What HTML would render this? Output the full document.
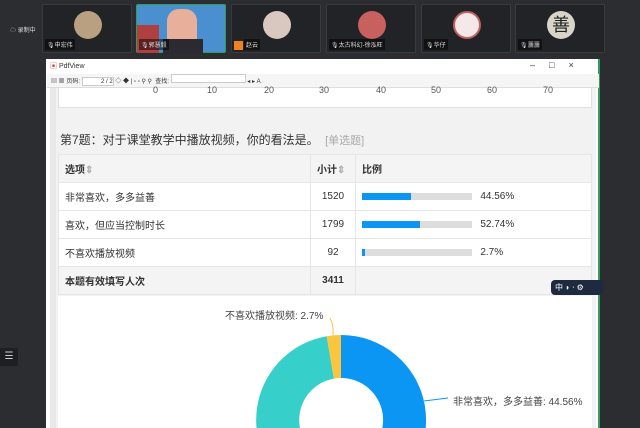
<!DOCTYPE html>
<html><head><meta charset="utf-8"><style>
*{margin:0;padding:0;box-sizing:border-box}
html,body{width:640px;height:428px;overflow:hidden}
body{background:#2b2d30;position:relative;font-family:"Liberation Sans","Noto Sans CJK SC",sans-serif}
.tile{position:absolute;top:4px;width:90px;height:49px;background:#222326;border:1px solid #3a3b3e;border-radius:2px}
.av{position:absolute;left:31px;top:6px;width:28px;height:28px;border-radius:50%}
.nm{position:absolute;left:2px;bottom:2px;font-size:6px;color:#ddd;background:rgba(0,0,0,.5);padding:1px 2px}
.abs{position:absolute}
td{border:1px solid #e6e6e6;font-size:10px;color:#333;padding:0 6px;height:28px;vertical-align:middle}
</style></head><body>
<div class="abs" style="left:10px;top:25px;font-size:6px;color:#ddd">☁ 录制中</div>
<div class="tile" style="left:42px"><div class="av" style="background:#b8a080"></div><div class="nm">🎙申宏伟</div></div>
<div class="tile" style="left:136px;border:1px solid #2e9e5b;background:#4a90d0"><div class="abs" style="left:0;top:20px;width:22px;height:28px;background:#b04040"></div><div class="abs" style="left:30px;top:4px;width:30px;height:45px;background:#e8b09a;border-radius:12px 12px 4px 4px"></div><div class="abs" style="left:26px;top:34px;width:40px;height:15px;background:#2a2a30"></div><div class="nm">🎙郭慧毅</div></div>
<div class="tile" style="left:231px"><div class="av" style="background:#d8c8c0"></div><div class="abs" style="left:2px;bottom:2px;width:9px;height:9px;background:#f08020"></div><div class="nm" style="left:12px">赵云</div></div>
<div class="tile" style="left:326px"><div class="av" style="background:#c86060"></div><div class="nm">🎙太古科幻-徐泓旺</div></div>
<div class="tile" style="left:421px"><div class="av" style="background:#f4e8e8;border:2px solid #c06060"></div><div class="nm">🎙华仔</div></div>
<div class="tile" style="left:515px"><div class="av" style="background:#d8d4c8;font-size:18px;text-align:center;line-height:28px;color:#222">善</div><div class="nm">🎙瀰瀰</div></div>
<div class="abs" style="left:46px;top:59px;width:554px;height:369px;background:#fff;border-right:2px solid #2e9e5b"></div>
<div class="abs" style="left:50px;top:61px;font-size:7px;color:#333"><span style="color:#d33">▣</span> PdfView</div>
<div class="abs" style="left:530px;top:60px;font-size:9px;color:#333;letter-spacing:14px">–□×</div>
<div class="abs" style="left:47px;top:74px;width:552px;height:14px;background:#f5f5f5;border-bottom:1px solid #ddd;font-size:6px;color:#333;line-height:14px;padding-left:4px">▤ ▦ 页码: <span style="display:inline-block;width:32px;height:9px;border:1px solid #ccc;background:#fff;text-align:right;line-height:8px">2 / 2</span> ◇ ◆ | ▫ ▫ ⚲ ⚲ &nbsp;查找: <span style="display:inline-block;width:75px;height:9px;border:1px solid #ccc;background:#fff"></span> ◂ ▸ A</div>
<div class="abs" style="left:50px;top:88px;width:6px;height:340px;background:#e8e8e8"></div>
<div class="abs" style="left:56px;top:88px;width:540px;height:340px;background:#f2f2f2"></div>
<div class="abs" style="left:58px;top:88px;width:534px;height:20px;background:#fff;border:1px solid #e0e0e0;border-top:none"></div>
<div class="abs" style="left:150px;top:85px;font-size:9px;color:#555">
<span style="position:absolute;left:3px">0</span><span style="position:absolute;left:57px">10</span><span style="position:absolute;left:114px">20</span><span style="position:absolute;left:169px">30</span><span style="position:absolute;left:226px">40</span><span style="position:absolute;left:281px">50</span><span style="position:absolute;left:337px">60</span><span style="position:absolute;left:393px">70</span></div>
<div class="abs" style="left:60px;top:131px;font-size:12px;color:#333">第7题：对于课堂教学中播放视频，你的看法是。 <span style="color:#aaa;font-size:11px">&nbsp;[单选题]</span></div>
<table class="abs" style="left:58px;top:154px;width:534px;border-collapse:collapse;background:#fff">
<tr style="background:#f4f4f4"><td style="width:252px;font-weight:bold">选项<span style="color:#aaa">⇕</span></td><td style="width:45px;font-weight:bold">小计<span style="color:#aaa">⇕</span></td><td style="font-weight:bold">比例</td></tr>
<tr><td>非常喜欢，多多益善</td><td style="text-align:center">1520</td><td><span style="display:inline-block;width:110px;height:7px;background:#ddd;vertical-align:middle"><span style="display:block;width:49px;height:7px;background:#0a96f2"></span></span> &nbsp; 44.56%</td></tr>
<tr><td>喜欢，但应当控制时长</td><td style="text-align:center">1799</td><td><span style="display:inline-block;width:110px;height:7px;background:#ddd;vertical-align:middle"><span style="display:block;width:58px;height:7px;background:#0a96f2"></span></span> &nbsp; 52.74%</td></tr>
<tr><td>不喜欢播放视频</td><td style="text-align:center">92</td><td><span style="display:inline-block;width:110px;height:7px;background:#ddd;vertical-align:middle"><span style="display:block;width:3px;height:7px;background:#0a96f2"></span></span> &nbsp; 2.7%</td></tr>
<tr style="background:#f4f4f4"><td style="font-weight:bold">本题有效填写人次</td><td style="text-align:center;font-weight:bold">3411</td><td></td></tr>
</table>
<div class="abs" style="left:58px;top:296px;width:534px;height:132px;background:#fff"></div>
<svg class="abs" style="left:0;top:0" width="640" height="428">
<path d="M341 335 A85 85 0 0 1 369.5 500.1 L355.1 459.6 A42 42 0 0 0 341 378 Z" fill="#0a96f2"/>
<path d="M369.5 500.1 A85 85 0 1 1 326.7 336.2 L333.9 378.6 A42 42 0 1 0 355.1 459.6 Z" fill="#36cfc9"/>
<path d="M326.7 336.2 A85 85 0 0 1 341 335 L341 378 A42 42 0 0 0 333.9 378.6 Z" fill="#fbc63e"/>
<path d="M330 318 Q334 325 333 335" stroke="#fbc63e" fill="none"/>
<path d="M424 401 L448 398" stroke="#0a96f2" fill="none"/>
<text x="225" y="319" font-size="10" fill="#444" font-family="Liberation Sans,Noto Sans CJK SC,sans-serif">不喜欢播放视频: 2.7%</text>
<text x="453" y="405" font-size="10" fill="#444" font-family="Liberation Sans,Noto Sans CJK SC,sans-serif">非常喜欢，多多益善: 44.56%</text>
</svg>
<div class="abs" style="left:551px;top:280px;width:52px;height:15px;background:#1e2a40;border-radius:4px;font-size:8px;color:#fff;line-height:15px;padding-left:4px">中 ◗ ⸱ ⚙</div>
<div class="abs" style="left:0;top:348px;width:18px;height:18px;background:#1e1f22;color:#ccc;font-size:10px;text-align:center;line-height:18px">☰</div>
</body></html>
